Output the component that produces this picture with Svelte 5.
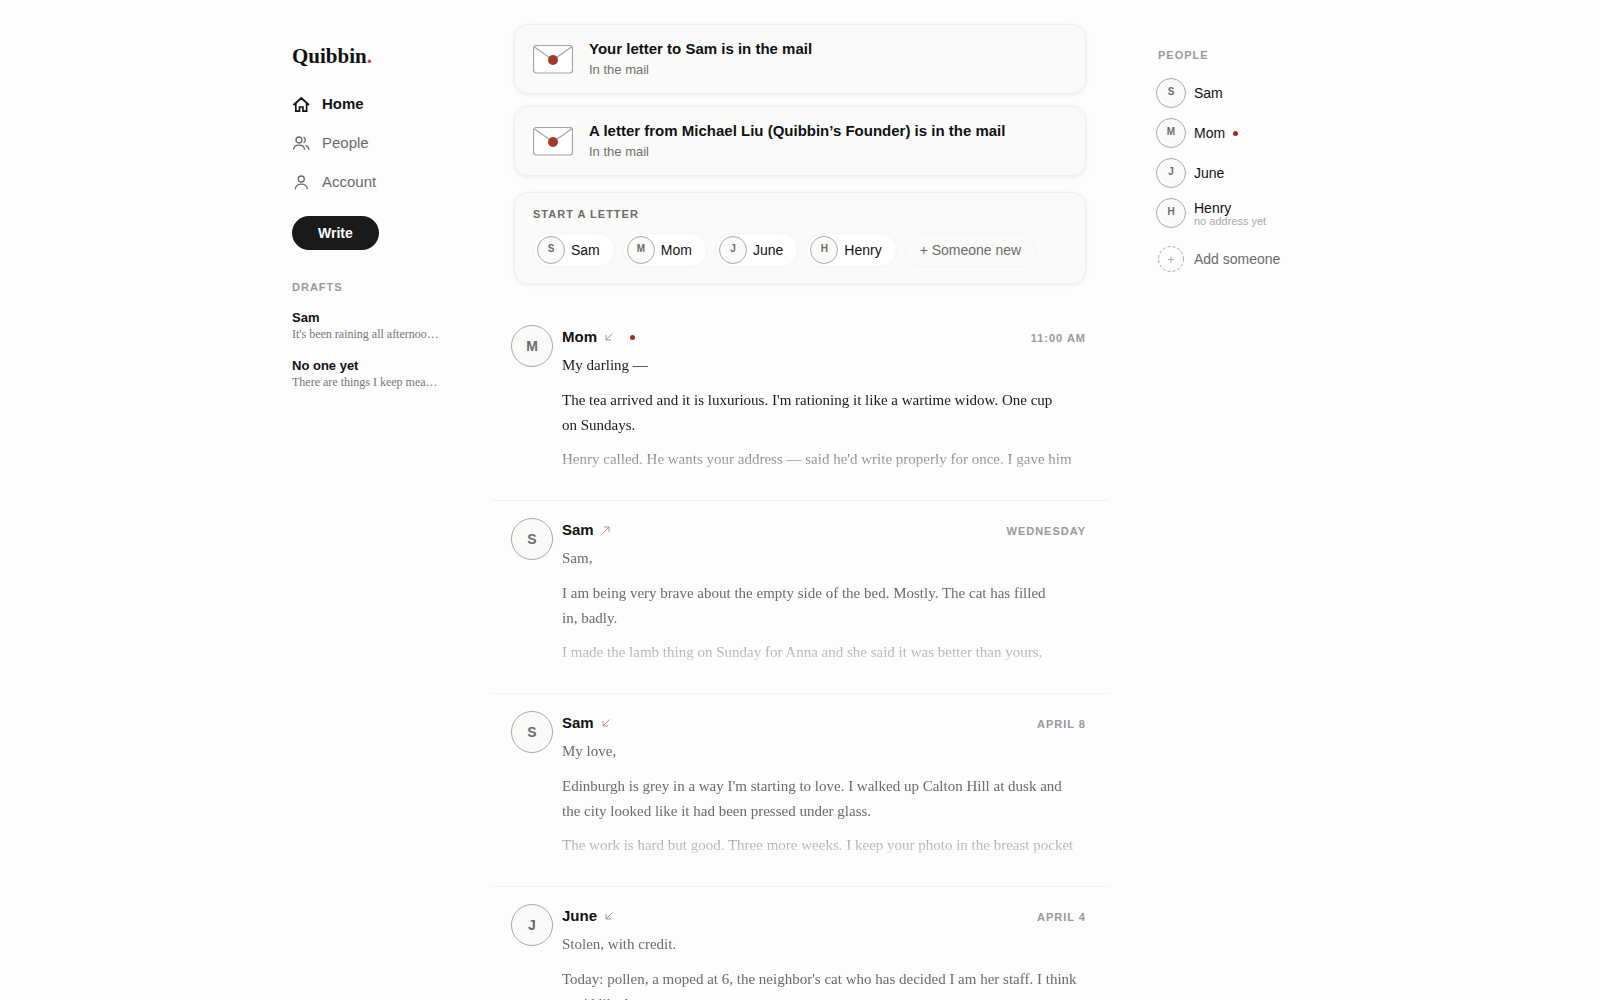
<script lang="ts">
  type Letter = {
    from: string;
    sent?: boolean;
    unread?: boolean;
    date: string;
    paragraphs: string[];
  };

  const nav = [
    { label: 'Home', icon: 'home', active: true },
    { label: 'People', icon: 'people', active: false },
    { label: 'Account', icon: 'account', active: false }
  ];

  const drafts = [
    { to: 'Sam', preview: "It's been raining all afternoon and" },
    { to: 'No one yet', preview: 'There are things I keep meaning' }
  ];

  const inTheMail = [
    { title: 'Your letter to Sam is in the mail', status: 'In the mail' },
    { title: 'A letter from Michael Liu (Quibbin’s Founder) is in the mail', status: 'In the mail' }
  ];

  const people = [
    { name: 'Sam' },
    { name: 'Mom', unread: true },
    { name: 'June' },
    { name: 'Henry', note: 'no address yet' }
  ];

  const letters: Letter[] = [
    {
      from: 'Mom',
      unread: true,
      date: '11:00 AM',
      paragraphs: [
        'My darling —',
        "The tea arrived and it is luxurious. I'm rationing it like a wartime widow. One cup on Sundays.",
        "Henry called. He wants your address — said he'd write properly for once. I gave him"
      ]
    },
    {
      from: 'Sam',
      sent: true,
      date: 'Wednesday',
      paragraphs: [
        'Sam,',
        'I am being very brave about the empty side of the bed. Mostly. The cat has filled in, badly.',
        'I made the lamb thing on Sunday for Anna and she said it was better than yours,'
      ]
    },
    {
      from: 'Sam',
      date: 'April 8',
      paragraphs: [
        'My love,',
        "Edinburgh is grey in a way I'm starting to love. I walked up Calton Hill at dusk and the city looked like it had been pressed under glass.",
        'The work is hard but good. Three more weeks. I keep your photo in the breast pocket'
      ]
    },
    {
      from: 'June',
      date: 'April 4',
      paragraphs: [
        'Stolen, with credit.',
        "Today: pollen, a moped at 6, the neighbor's cat who has decided I am her staff. I think you'd like her."
      ]
    }
  ];
</script>

<div class="app">
  <aside class="sidebar">
    <a class="logo" href="#home">Quibbin<span>.</span></a>

    <nav>
      {#each nav as item}
        <a href="#{item.icon}" class:active={item.active}>
          <svg viewBox="0 0 18 18" aria-hidden="true">
            {#if item.icon === 'home'}
              <path d="M1.5 10 9.300 3l7.700 7M3.800 8.500v7.700h3.700v-4.200h3.400v4.200h3.700V8.500" />
            {:else if item.icon === 'people'}
              <circle cx="7" cy="6" r="3" />
              <path d="M1.500 15.800c0-3 2.300-4.600 5.500-4.600s5.500 1.600 5.500 4.600M11.500 3.200a3 3 0 0 1 0 5.500M13.700 11.300c2 .8 3 2.300 3.200 4.500" />
            {:else}
              <circle cx="9.3" cy="6" r="3" />
              <path d="M3.300 16.200c.3-3.200 2.700-5 6-5s5.700 1.800 6 5" />
            {/if}
          </svg>
          {item.label}
        </a>
      {/each}
    </nav>

    <button class="write" type="button">Write</button>

    <section class="drafts">
      <h2>Drafts</h2>
      {#each drafts as draft}
        <a href="#draft">
          <strong>{draft.to}</strong>
          <span>{draft.preview}</span>
        </a>
      {/each}
    </section>
  </aside>

  <main>
    <div class="top">
      {#each inTheMail as mail}
        <article class="card mail">
          <svg viewBox="0 0 40 30" aria-hidden="true">
            <rect x="0.5" y="0.5" width="39" height="27.5" rx="3" fill="#fff" />
            <path d="M1.5 2 20 15l18.500-13" />
            <circle cx="20" cy="15" r="5" />
          </svg>
          <div>
            <h3>{mail.title}</h3>
            <p>{mail.status}</p>
          </div>
        </article>
      {/each}

      <section class="card start">
        <h2>Start a letter</h2>
        <div class="chips">
          {#each people as person}
            <button type="button" class="chip">
              <span class="avatar small">{person.name[0]}</span>
              {person.name}
            </button>
          {/each}
          <button type="button" class="chip new">+ Someone new</button>
        </div>
      </section>
    </div>

    {#each letters as letter}
      <article class="letter" class:unread={letter.unread}>
        <span class="avatar large">{letter.from[0]}</span>
        <div class="content">
          <header>
            <h3>{letter.from}</h3>
            <svg viewBox="0 0 10 10" aria-hidden="true">
              {#if letter.sent}
                <path d="M1.500 8.500 8 2M3 2h5v5" />
              {:else}
                <path d="M8.500 1.500 2 8M2 3v5h5" />
              {/if}
            </svg>
            {#if letter.unread}<i class="dot"></i>{/if}
            <time>{letter.date}</time>
          </header>
          <div class="excerpt">
            {#each letter.paragraphs as paragraph}
              <p>{paragraph}</p>
            {/each}
          </div>
        </div>
      </article>
    {/each}
  </main>

  <aside class="people">
    <h2>People</h2>
    {#each people as person}
      <a href="#person">
        <span class="avatar medium">{person.name[0]}</span>
        <span class="who">
          {person.name}
          {#if person.note}<small>{person.note}</small>{/if}
        </span>
        {#if person.unread}<i class="dot"></i>{/if}
      </a>
    {/each}
    <button type="button" class="add">
      <svg viewBox="0 0 30 30" aria-hidden="true">
        <circle cx="15" cy="15" r="12.5" stroke-dasharray="3 2" />
        <path d="M12 15.500h6M15 12.500v6" />
      </svg>
      Add someone
    </button>
  </aside>
</div>

<style>
  :global(body) {
    margin: 0;
    background: #fdfdfd;
  }

  .app {
    display: grid;
    grid-template-columns: 176px minmax(0, 616px) 176px;
    justify-content: center;
    gap: 24px;
    height: 100vh;
    overflow: hidden;
    color: #111;
    font-family: 'Liberation Sans', Arial, sans-serif;
  }

  h2,
  h3,
  p {
    margin: 0;
  }

  h2 {
    color: #999;
    font-size: 11px;
    line-height: 14px;
    letter-spacing: 1px;
    text-transform: uppercase;
  }

  a {
    color: inherit;
    text-decoration: none;
  }

  button {
    border: 0;
    padding: 0;
    background: none;
    font: inherit;
    cursor: pointer;
  }

  svg {
    flex: none;
    fill: none;
    stroke: currentColor;
  }

  .sidebar {
    padding-top: 43px;
  }

  .logo {
    display: block;
    font: bold 21px/26px 'Liberation Serif', serif;
  }

  .logo span {
    color: #b8432f;
  }

  nav {
    display: grid;
    gap: 15px;
    margin-top: 23px;
  }

  nav a {
    display: flex;
    align-items: center;
    gap: 12px;
    color: #6b6b6b;
    font-size: 15px;
    line-height: 24px;
  }

  nav a.active {
    color: #111;
    font-weight: bold;
  }

  nav svg {
    width: 18px;
    height: 18px;
    stroke-width: 1.3;
  }

  nav .active svg {
    stroke-width: 1.7;
  }

  .write {
    margin-top: 22px;
    border-radius: 17px;
    padding: 0 26px;
    background: #1a1a1a;
    color: #fff;
    font-size: 14px;
    font-weight: bold;
    line-height: 34px;
  }

  .drafts {
    margin-top: 30px;
  }

  .drafts a {
    display: block;
    width: 148px;
    margin-top: 16px;
  }

  .drafts strong,
  .drafts span {
    display: block;
    overflow: hidden;
    font-size: 13px;
    line-height: 16px;
    text-overflow: ellipsis;
    white-space: nowrap;
  }

  .drafts span {
    color: #777;
    font-family: 'Liberation Serif', serif;
    font-size: 12px;
  }

  .top {
    display: grid;
    gap: 12px;
    padding: 24px 22px 0;
  }

  .card {
    border: 1px solid #f0f0ef;
    border-radius: 14px;
    background: #fafaf8;
    box-shadow: 0 1px 4px rgba(0, 0, 0, 0.08);
  }

  .mail {
    display: flex;
    align-items: center;
    gap: 16px;
    padding: 14px 18px 12px;
  }

  .mail svg {
    width: 40px;
    height: 30px;
    stroke: #a3a3a3;
    stroke-width: 1.2;
  }

  .mail circle {
    fill: #a03a2c;
    stroke: none;
  }

  .mail h3 {
    font-size: 15px;
    line-height: 20px;
  }

  .mail p {
    color: #6f6f6f;
    font-size: 13px;
    line-height: 22px;
  }

  .start {
    margin-top: 4px;
    padding: 14px 18px 16px;
  }

  .start h2 {
    color: #6b6b6b;
  }

  .chips {
    display: flex;
    flex-wrap: wrap;
    gap: 8px;
    margin-top: 12px;
  }

  .chip {
    display: flex;
    align-items: center;
    gap: 6px;
    border: 1px solid #f4f4f2;
    border-radius: 17px;
    padding: 2px 14px 2px 3px;
    background: #fff;
    color: #111;
    font-size: 14px;
    line-height: 28px;
  }

  .chip.new {
    padding: 2px 14px;
    background: none;
    color: #6b6b6b;
  }

  .avatar {
    flex: none;
    box-sizing: border-box;
    border: 1px solid #aaa;
    border-radius: 50%;
    background: #fafaf8;
    color: #6b6b6b;
    font-weight: bold;
    text-align: center;
  }

  .small {
    width: 28px;
    height: 28px;
    font-size: 10px;
    line-height: 24px;
  }

  .medium {
    width: 30px;
    height: 30px;
    font-size: 10px;
    line-height: 26px;
  }

  .large {
    width: 42px;
    height: 42px;
    font-size: 14px;
    line-height: 40px;
  }

  .letter {
    display: flex;
    gap: 9px;
    border-bottom: 1px solid #f2f2f2;
    padding: 17px 22px 32px 19px;
  }

  .top + .letter {
    margin-top: 24px;
  }

  .content {
    flex: 1;
    min-width: 0;
  }

  .letter header {
    display: flex;
    align-items: baseline;
    gap: 7px;
    margin-bottom: 4px;
  }

  .letter h3 {
    font-size: 15px;
    line-height: 24px;
  }

  .letter header svg {
    align-self: center;
    width: 10px;
    height: 10px;
    color: #999;
  }

  .dot {
    width: 5px;
    height: 5px;
    border-radius: 50%;
    background: #a52a1e;
  }

  .letter .dot {
    align-self: center;
    margin-left: 9px;
  }

  time {
    margin-left: auto;
    color: #999;
    font-size: 11px;
    font-weight: bold;
    letter-spacing: 1px;
    text-transform: uppercase;
  }

  .excerpt {
    height: 115px;
    overflow: hidden;
    padding-right: 4px;
    color: #6b6b6b;
    font: 15px/25px 'Liberation Serif', serif;
    text-wrap: pretty;
    mask-image: linear-gradient(#000 70%, rgba(0, 0, 0, 0.3));
  }

  .unread .excerpt {
    color: #1a1a1a;
  }

  .excerpt p + p {
    margin-top: 10px;
  }

  .excerpt p:nth-child(3) {
    margin-top: 9px;
  }

  .people {
    padding: 48px 0 0 24px;
  }

  .people a,
  .add {
    display: flex;
    align-items: center;
    gap: 8px;
    height: 40px;
    font-size: 14px;
  }

  .people h2 {
    margin: 0 0 11px 2px;
  }

  .who small {
    display: block;
    color: #aaa;
    font-size: 11px;
    line-height: 11px;
  }

  .add {
    margin-top: 6px;
    color: #6b6b6b;
  }

  .add svg {
    width: 30px;
    height: 30px;
    stroke: #aaa;
  }
</style>
